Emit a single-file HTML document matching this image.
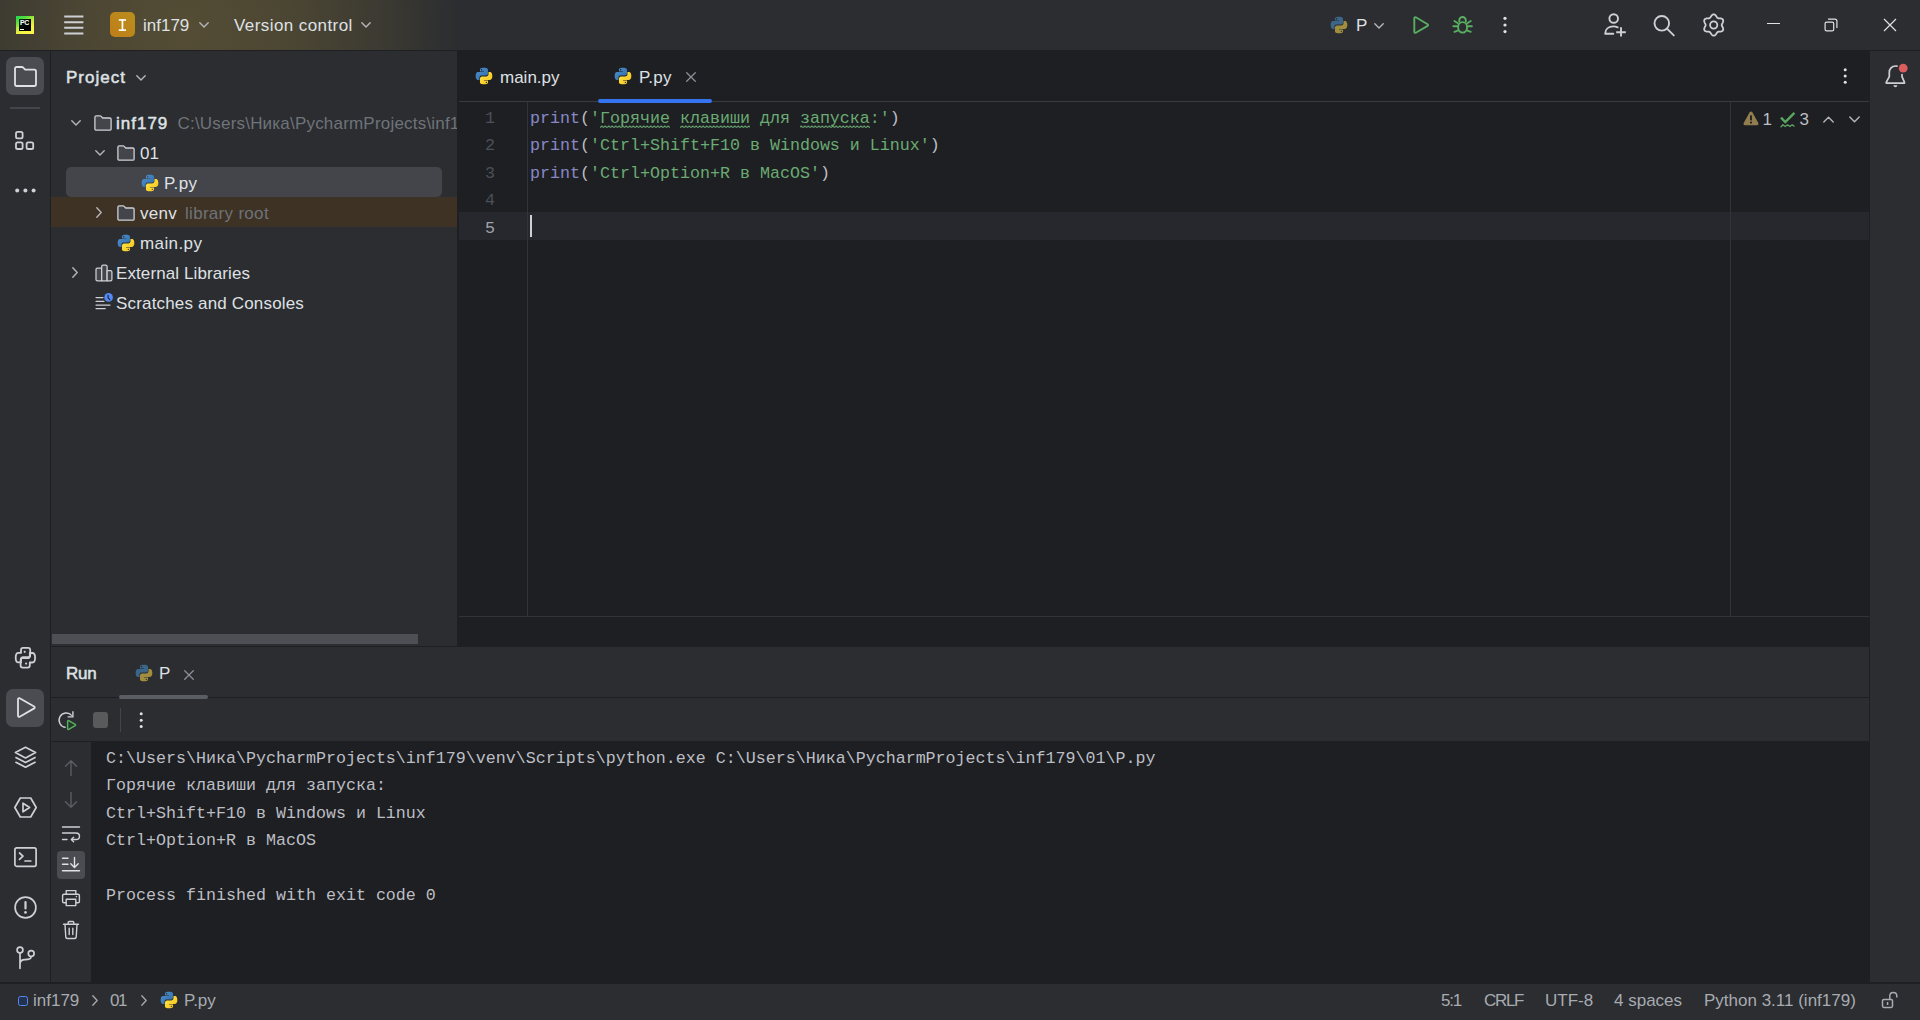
<!DOCTYPE html>
<html><head><meta charset="utf-8">
<style>
*{margin:0;padding:0;box-sizing:border-box}
html,body{width:1920px;height:1020px;overflow:hidden;background:#1E1F22}
body{position:relative;font-family:"Liberation Sans",sans-serif;color:#DFE1E5;font-size:17px}
.a{position:absolute}
svg{position:absolute;overflow:visible}
.t{position:absolute;white-space:pre;line-height:0;font-size:17px}
.b{font-weight:bold}
.sb{-webkit-text-stroke:0.5px #DFE1E5}
.m{position:absolute;white-space:pre;line-height:0;font-family:"Liberation Mono",monospace;font-size:16.667px}
.ic{fill:none;stroke:#CED0D6;stroke-width:1.6;stroke-linecap:round;stroke-linejoin:round}
</style></head><body>


<svg width="0" height="0" style="position:absolute">
<defs>
<linearGradient id="pyb" x1="0" y1="0" x2="1" y2="1"><stop offset="0" stop-color="#4F93D2"/><stop offset="1" stop-color="#2E69A3"/></linearGradient><linearGradient id="pyy" x1="0" y1="0" x2="1" y2="1"><stop offset="0" stop-color="#FFE84A"/><stop offset="1" stop-color="#F5C11A"/></linearGradient>
<symbol id="py" viewBox="0 0 16 16">
<path fill="url(#pyb)" d="M7.9 0.6C4.2 0.6 4.4 2.2 4.4 2.2V3.9H8V4.4H3C3 4.4 0.6 4.1 0.6 7.9 0.6 11.6 2.7 11.5 2.7 11.5H4V9.7S3.9 7.6 6 7.6H9.6S11.6 7.6 11.6 5.7V2.5S11.9 0.6 7.9 0.6ZM5.9 1.7A.65.65 0 1 1 5.9 3 .65.65 0 0 1 5.9 1.7Z"/>
<path fill="url(#pyy)" d="M8.1 15.4C11.8 15.4 11.6 13.8 11.6 13.8V12.1H8V11.6H13S15.4 11.9 15.4 8.1C15.4 4.4 13.3 4.5 13.3 4.5H12V6.3S12.1 8.4 10 8.4H6.4S4.4 8.4 4.4 10.3V13.5S4.1 15.4 8.1 15.4ZM10.1 14.3A.65.65 0 1 1 10.1 13 .65.65 0 0 1 10.1 14.3Z"/>
</symbol>
<symbol id="pyd" viewBox="0 0 16 16">
<path fill="#3B6589" d="M7.9 0.6C4.2 0.6 4.4 2.2 4.4 2.2V3.9H8V4.4H3C3 4.4 0.6 4.1 0.6 7.9 0.6 11.6 2.7 11.5 2.7 11.5H4V9.7S3.9 7.6 6 7.6H9.6S11.6 7.6 11.6 5.7V2.5S11.9 0.6 7.9 0.6ZM5.9 1.7A.65.65 0 1 1 5.9 3 .65.65 0 0 1 5.9 1.7Z"/>
<path fill="#A08D3E" d="M8.1 15.4C11.8 15.4 11.6 13.8 11.6 13.8V12.1H8V11.6H13S15.4 11.9 15.4 8.1C15.4 4.4 13.3 4.5 13.3 4.5H12V6.3S12.1 8.4 10 8.4H6.4S4.4 8.4 4.4 10.3V13.5S4.1 15.4 8.1 15.4ZM10.1 14.3A.65.65 0 1 1 10.1 13 .65.65 0 0 1 10.1 14.3Z"/>
</symbol>
<symbol id="chev" viewBox="0 0 10 6"><path d="M0.8 0.8L5 5L9.2 0.8" fill="none" stroke="#B4B6BB" stroke-width="1.4" stroke-linecap="round" stroke-linejoin="round"/></symbol>
<symbol id="folder" viewBox="0 0 20 20"><path d="M1.9 4.2C1.9 3.4 2.5 2.9 3.2 2.9H7.2C7.6 2.9 7.9 3.1 8.2 3.4L9.7 5H16.8C17.5 5 18.1 5.6 18.1 6.3V16C18.1 16.7 17.5 17.2 16.8 17.2H3.2C2.5 17.2 1.9 16.7 1.9 16Z" fill="#43454A" stroke="#CED0D6" stroke-width="1.3" stroke-linejoin="round"/></symbol>
</defs></svg>
<!-- ============ LAYOUT ============ -->
<!-- title bar -->
<div class="a" style="left:0;top:0;width:1920px;height:50px;background:#2B2D30"></div>
<div class="a" style="left:0;top:0;width:1920px;height:50px;background:radial-gradient(ellipse 275px 320px at 185px 30px, rgba(180,150,62,0.30) 0%, rgba(180,150,62,0.23) 40%, rgba(180,150,62,0.11) 75%, rgba(180,150,62,0.03) 92%, rgba(180,150,62,0) 100%)"></div>
<div class="a" style="left:0;top:50px;width:1920px;height:1px;background:#1E1F22"></div>

<!-- left stripe -->
<div class="a" style="left:0;top:51px;width:50px;height:931px;background:#2B2D30"></div>
<div class="a" style="left:50px;top:51px;width:1px;height:931px;background:#1E1F22"></div>

<!-- project panel -->
<div class="a" style="left:51px;top:51px;width:406px;height:595px;background:#2B2D30"></div>
<div class="a" style="left:457px;top:51px;width:2px;height:595px;background:#1E1F22"></div>

<!-- right stripe -->
<div class="a" style="left:1870px;top:51px;width:50px;height:931px;background:#2B2D30"></div>

<!-- editor -->
<div class="a" style="left:459px;top:101px;width:1410px;height:1px;background:#393B40"></div>
<div class="a" style="left:459px;top:212px;width:1410px;height:28px;background:#26282E"></div>
<div class="a" style="left:527px;top:102px;width:1px;height:514px;background:#313438"></div>
<div class="a" style="left:1730px;top:102px;width:1px;height:514px;background:#313438"></div>
<div class="a" style="left:459px;top:616px;width:1410px;height:1px;background:#313438"></div>

<!-- run panel -->
<div class="a" style="left:51px;top:646px;width:1818px;height:1px;background:#1E1F22"></div>
<div class="a" style="left:51px;top:647px;width:1818px;height:50px;background:#2B2D30"></div>
<div class="a" style="left:51px;top:697px;width:1818px;height:1px;background:#1E1F22"></div>
<div class="a" style="left:51px;top:698px;width:1818px;height:43px;background:#2B2D30"></div>
<div class="a" style="left:51px;top:741px;width:1818px;height:1px;background:#1E1F22"></div>
<div class="a" style="left:51px;top:742px;width:40px;height:240px;background:#2B2D30"></div>

<!-- status bar -->
<div class="a" style="left:0;top:984px;width:1920px;height:36px;background:#2B2D30"></div>

<!-- ============ TITLE BAR CONTENT ============ -->
<!-- PyCharm logo -->
<div class="a" style="left:16px;top:16px;width:18px;height:18px;background:linear-gradient(150deg,#1FD65A 0%,#4FDC3C 22%,#C8EC3E 50%,#F6F444 70%,#FCF84A 100%)"></div>
<div class="a" style="left:19px;top:19px;width:12px;height:12px;background:linear-gradient(135deg,#0B2A12,#000 60%)"></div>
<div class="t b" style="left:20px;top:22.5px;font-size:7px;color:#fff;letter-spacing:-0.3px">PC</div>
<div class="a" style="left:20px;top:28.5px;width:4px;height:1.2px;background:#fff"></div>

<!-- hamburger -->
<svg style="left:64px;top:14px" width="20" height="22"><g stroke="#CDCFD4" stroke-width="2" stroke-linecap="butt"><path d="M0.2 2.5H19.4M0.2 8.2H19.4M0.2 13.8H19.4M0.2 19.4H19.4"/></g></svg>

<!-- project icon -->
<div class="a" style="left:110px;top:12px;width:25px;height:25px;border-radius:5px;background:linear-gradient(225deg,#B98D1E 0%,#BC861B 50%,#C07D19 100%)"></div>
<svg style="left:110px;top:12px" width="25" height="25"><g fill="#FFFFFF"><rect x="8.8" y="7.2" width="7.2" height="1.6"/><rect x="8.8" y="17.3" width="7.2" height="1.6"/><rect x="11.6" y="7.2" width="1.7" height="11.6"/></g></svg>
<div class="t" style="left:143px;top:26px">inf179</div>
<svg style="left:199px;top:22px" width="10" height="6"><path d="M0.8 0.8L5 5L9.2 0.8" fill="none" stroke="#B4B6BB" stroke-width="1.4" stroke-linecap="round" stroke-linejoin="round"/></svg>
<div class="t" style="left:234px;top:26px;letter-spacing:0.42px">Version control</div>
<svg style="left:361px;top:22px" width="10" height="6"><path d="M0.8 0.8L5 5L9.2 0.8" fill="none" stroke="#B4B6BB" stroke-width="1.4" stroke-linecap="round" stroke-linejoin="round"/></svg>


<!-- title bar right -->
<svg style="left:1330px;top:16px" width="18" height="18"><use href="#pyd"/></svg>
<div class="t" style="left:1356px;top:26px">P</div>
<svg style="left:1374px;top:23px" width="10" height="6"><use href="#chev"/></svg>
<svg style="left:1410px;top:15px" width="20" height="20" viewBox="0 0 20 20"><path d="M4.3 3.2C4.3 2.4 5.1 1.9 5.8 2.3L17.6 9.2C18.2 9.6 18.2 10.5 17.6 10.9L5.8 17.7C5.1 18.1 4.3 17.6 4.3 16.8Z" fill="none" stroke="#5AAE62" stroke-width="1.9" stroke-linejoin="round"/></svg>
<svg style="left:1445px;top:10px" width="35" height="30" viewBox="0 0 35 30"><g fill="none" stroke="#5AAE62" stroke-width="1.9" stroke-linecap="round" stroke-linejoin="round"><ellipse cx="17.6" cy="17.35" rx="4.5" ry="5.25"/><path d="M14.3 11.6V10.3A3.25 3.25 0 0 1 20.8 10.3V11.6"/><path d="M12.9 13.2L9.4 11M12.2 16.3H8.3M12.8 20.6L9.4 21.8M22.3 13.2L25.8 11M23 16.3H26.9M22.4 20.6L25.8 21.8"/></g></svg>
<svg style="left:1502px;top:16px" width="6" height="18"><g fill="#DFE1E5"><circle cx="3" cy="2.3" r="1.6"/><circle cx="3" cy="9" r="1.6"/><circle cx="3" cy="15.6" r="1.6"/></g></svg>

<svg style="left:1603px;top:13px" width="24" height="25" viewBox="0 0 24 25"><g fill="none" stroke="#CED0D6" stroke-width="1.9" stroke-linecap="round" stroke-linejoin="round"><circle cx="10.7" cy="5.5" r="4.3"/><path d="M10.3 20.7H2.2C2.2 16.3 5.5 13.4 10.5 13.4C12 13.4 13.5 13.7 14.7 14.3"/><path d="M18 14.2V23.6M13.2 19.3H22.8" stroke-linecap="butt"/></g></svg>
<svg style="left:1652px;top:14px" width="24" height="24" viewBox="0 0 24 24"><g fill="none" stroke="#CED0D6" stroke-width="1.9" stroke-linecap="round"><circle cx="9.8" cy="9.3" r="7.3"/><path d="M15.2 14.8L21.8 21.4"/></g></svg>
<svg style="left:1701px;top:12px" width="25" height="25" viewBox="0 0 25 25"><g fill="none" stroke="#CED0D6" stroke-width="1.8" stroke-linejoin="round"><path d="M20.75 13.00 L20.79 13.35 L20.89 13.72 L21.06 14.10 L21.27 14.51 L21.50 14.95 L21.73 15.42 L21.94 15.91 L22.10 16.42 L22.19 16.93 L22.19 17.43 L22.11 17.90 L21.92 18.32 L21.64 18.70 L21.28 19.01 L20.85 19.25 L20.36 19.43 L19.84 19.54 L19.31 19.61 L18.79 19.65 L18.29 19.66 L17.83 19.69 L17.42 19.74 L17.05 19.83 L16.73 19.97 L16.44 20.18 L16.18 20.45 L15.93 20.79 L15.68 21.18 L15.41 21.60 L15.12 22.03 L14.80 22.46 L14.44 22.85 L14.04 23.18 L13.61 23.44 L13.16 23.60 L12.70 23.65 L12.24 23.60 L11.79 23.44 L11.36 23.18 L10.96 22.85 L10.60 22.46 L10.28 22.03 L9.99 21.60 L9.72 21.18 L9.47 20.79 L9.22 20.45 L8.96 20.18 L8.68 19.97 L8.35 19.83 L7.98 19.74 L7.57 19.69 L7.11 19.66 L6.61 19.65 L6.09 19.61 L5.56 19.54 L5.04 19.43 L4.55 19.25 L4.12 19.01 L3.76 18.70 L3.48 18.33 L3.29 17.90 L3.21 17.43 L3.21 16.93 L3.30 16.42 L3.46 15.91 L3.67 15.42 L3.90 14.95 L4.13 14.51 L4.34 14.10 L4.51 13.72 L4.61 13.35 L4.65 13.00 L4.61 12.65 L4.51 12.28 L4.34 11.90 L4.13 11.49 L3.90 11.05 L3.67 10.58 L3.46 10.09 L3.30 9.58 L3.21 9.07 L3.21 8.57 L3.29 8.10 L3.48 7.67 L3.76 7.30 L4.12 6.99 L4.55 6.75 L5.04 6.57 L5.56 6.46 L6.09 6.39 L6.61 6.35 L7.11 6.34 L7.57 6.31 L7.98 6.26 L8.35 6.17 L8.67 6.03 L8.96 5.82 L9.22 5.55 L9.47 5.21 L9.72 4.82 L9.99 4.40 L10.28 3.97 L10.60 3.54 L10.96 3.15 L11.36 2.82 L11.79 2.56 L12.24 2.40 L12.70 2.35 L13.16 2.40 L13.61 2.56 L14.04 2.82 L14.44 3.15 L14.80 3.54 L15.12 3.97 L15.41 4.40 L15.68 4.82 L15.93 5.21 L16.18 5.55 L16.44 5.82 L16.72 6.03 L17.05 6.17 L17.42 6.26 L17.83 6.31 L18.29 6.34 L18.79 6.35 L19.31 6.39 L19.84 6.46 L20.36 6.57 L20.85 6.75 L21.28 6.99 L21.64 7.30 L21.92 7.68 L22.11 8.10 L22.19 8.57 L22.19 9.07 L22.10 9.58 L21.94 10.09 L21.73 10.58 L21.50 11.05 L21.27 11.49 L21.06 11.90 L20.89 12.28 L20.79 12.65Z"/><circle cx="12.7" cy="13" r="3.6"/></g></svg>
<div class="a" style="left:1767px;top:23px;width:12.5px;height:1.3px;background:#DFE1E5"></div>
<svg style="left:1824px;top:18px" width="14" height="14" viewBox="0 0 14 14"><g fill="none" stroke="#DFE1E5" stroke-width="1.2"><rect x="1.1" y="4.1" width="8.6" height="8.8" rx="1.5"/><path d="M4 1.1H10.9C12 1.1 12.9 2 12.9 3.1V10"/></g></svg>
<svg style="left:1883px;top:18px" width="14" height="14" viewBox="0 0 14 14"><path d="M1 1L13 13M13 1L1 13" fill="none" stroke="#DFE1E5" stroke-width="1.2"/></svg>



<!-- ============ PROJECT PANEL ============ -->
<div class="t sb" style="left:66px;top:78px;letter-spacing:1px">Project</div>
<svg style="left:136px;top:75px" width="10" height="6"><use href="#chev"/></svg>

<!-- tree -->
<div class="a" style="left:66px;top:167px;width:376px;height:30px;border-radius:5px;background:#43454A"></div>
<div class="a" style="left:51px;top:197px;width:406px;height:30px;background:#3D3223"></div>

<svg style="left:71px;top:120px" width="10" height="6"><use href="#chev"/></svg>
<svg style="left:93px;top:113px" width="20" height="20"><use href="#folder"/></svg>
<div class="t sb" style="left:116px;top:124px;letter-spacing:1px">inf179</div>
<div class="a" style="left:170px;top:107px;width:287px;height:30px;overflow:hidden"><div class="t" style="left:7.5px;top:17px;color:#6F737A;letter-spacing:0.2px">C:\Users\Ника\PycharmProjects\inf179</div></div>

<svg style="left:95px;top:150px" width="10" height="6"><use href="#chev"/></svg>
<svg style="left:116px;top:143px" width="20" height="20"><use href="#folder"/></svg>
<div class="t" style="left:140px;top:154px">01</div>

<svg style="left:141px;top:174px" width="18" height="18"><use href="#py"/></svg>
<div class="t" style="left:164px;top:184px;letter-spacing:0.4px">P.py</div>

<svg style="left:96px;top:207px" width="6" height="11" viewBox="0 0 6 11"><path d="M0.8 0.8L5.2 5.5L0.8 10.2" fill="none" stroke="#B4B6BB" stroke-width="1.4" stroke-linecap="round" stroke-linejoin="round"/></svg>
<svg style="left:116px;top:203px" width="20" height="20"><use href="#folder"/></svg>
<div class="t" style="left:140px;top:214px;letter-spacing:0.3px">venv</div>
<div class="t" style="left:185px;top:214px;color:#6F737A;letter-spacing:0.3px">library root</div>

<svg style="left:117px;top:234px" width="18" height="18"><use href="#py"/></svg>
<div class="t" style="left:140px;top:244px;letter-spacing:0.4px">main.py</div>

<svg style="left:72px;top:267px" width="6" height="11" viewBox="0 0 6 11"><path d="M0.8 0.8L5.2 5.5L0.8 10.2" fill="none" stroke="#B4B6BB" stroke-width="1.4" stroke-linecap="round" stroke-linejoin="round"/></svg>
<svg style="left:93px;top:263px" width="20" height="20" viewBox="0 0 20 20"><g fill="#43454A" stroke="#CED0D6" stroke-width="1.25" stroke-linejoin="round"><path d="M3 6.4C3 5.6 3.6 5 4.4 5H8.7V17.8H4.4C3.6 17.8 3 17.2 3 16.4Z"/><path d="M8.7 3.4C8.7 2.6 9.3 2 10.1 2H12.7C13.5 2 14.1 2.6 14.1 3.4V17.8H8.7Z"/><path d="M14.1 7.5H17.5C18.3 7.5 18.9 8.1 18.9 8.9V16.4C18.9 17.2 18.3 17.8 17.5 17.8H14.1Z"/></g></svg>
<div class="t" style="left:116px;top:274px;letter-spacing:0.1px">External Libraries</div>

<svg style="left:93px;top:293px" width="20" height="20" viewBox="0 0 20 20"><g fill="none" stroke="#CED0D6" stroke-width="1.25" stroke-linecap="round"><path d="M3 4.6H10M3 8.3H11M3 12H17M3 15.6H12.2"/></g><circle cx="15.6" cy="4.4" r="4.3" fill="#548AF7"/><path d="M15.1 2.3V4.8L16.8 6.6" fill="none" stroke="#1E1F22" stroke-width="1.1" stroke-linecap="round"/></svg>
<div class="t" style="left:116px;top:304px;letter-spacing:0.17px">Scratches and Consoles</div>

<!-- project h-scrollbar -->
<div class="a" style="left:52px;top:634px;width:366px;height:10px;background:#4D4F54"></div>


<!-- ============ EDITOR ============ -->
<svg style="left:475px;top:67px" width="18" height="18"><use href="#py"/></svg>
<div class="t" style="left:500px;top:78px;letter-spacing:0px">main.py</div>
<svg style="left:614px;top:67px" width="18" height="18"><use href="#py"/></svg>
<div class="t" style="left:639px;top:78px;letter-spacing:0.2px">P.py</div>
<svg style="left:686px;top:71.5px" width="10" height="10" viewBox="0 0 10 10"><path d="M0.7 0.7L9.3 9.3M9.3 0.7L0.7 9.3" fill="none" stroke="#8C8F95" stroke-width="1.3" stroke-linecap="round"/></svg>
<div class="a" style="left:598px;top:99px;width:114px;height:4px;border-radius:2px;background:#3574F0"></div>
<svg style="left:1843px;top:68px" width="5" height="16"><g fill="#DFE1E5"><circle cx="2.2" cy="1.8" r="1.5"/><circle cx="2.2" cy="8" r="1.5"/><circle cx="2.2" cy="14.2" r="1.5"/></g></svg>

<!-- gutter numbers -->
<div class="m" style="left:485px;top:118.5px;color:#4B5059">1</div>
<div class="m" style="left:485px;top:146px;color:#4B5059">2</div>
<div class="m" style="left:485px;top:173.5px;color:#4B5059">3</div>
<div class="m" style="left:485px;top:201px;color:#4B5059">4</div>
<div class="m" style="left:485px;top:228.5px;color:#A1A3AB">5</div>

<!-- code -->
<div class="m" style="left:530px;top:118.5px;color:#BCBEC4"><span style="color:#8888C6">print</span>(<span style="color:#6AAB73">'Горячие клавиши для запуска:'</span>)</div>
<div class="m" style="left:530px;top:146px;color:#BCBEC4"><span style="color:#8888C6">print</span>(<span style="color:#6AAB73">'Ctrl+Shift+F10 в Windows и Linux'</span>)</div>
<div class="m" style="left:530px;top:173.5px;color:#BCBEC4"><span style="color:#8888C6">print</span>(<span style="color:#6AAB73">'Ctrl+Option+R в MacOS'</span>)</div>
<div class="a" style="left:530px;top:215px;width:2px;height:22px;background:#CED0D6"></div>
<!-- typo squiggles -->
<svg style="left:600px;top:124.5px" width="300" height="4" viewBox="0 0 300 4"><defs><pattern id="wv" width="3.5" height="4" patternUnits="userSpaceOnUse"><path d="M0 2.6L1.75 0.9L3.5 2.6" fill="none" stroke="#6AAB73" stroke-width="1"/></pattern></defs><rect x="0" y="0" width="70" height="4" fill="url(#wv)"/><rect x="80" y="0" width="70" height="4" fill="url(#wv)"/><rect x="200" y="0" width="70" height="4" fill="url(#wv)"/></svg>

<!-- inspection widget -->
<svg style="left:1743px;top:111px" width="16" height="15" viewBox="0 0 16 15"><path d="M6.6 1.3C7.2 0.3 8.8 0.3 9.4 1.3L15.3 12C15.9 13 15.1 14.3 14 14.3H2C0.9 14.3 0.1 13 0.7 12Z" fill="#927D4E"/><rect x="7.1" y="4.2" width="1.8" height="5.2" rx="0.6" fill="#1E1F22"/><circle cx="8" cy="11.6" r="1.05" fill="#1E1F22"/></svg>
<div class="t" style="left:1762.5px;top:120px;color:#BCBEC4">1</div>
<svg style="left:1779px;top:110px" width="18" height="19" viewBox="0 0 18 19"><path d="M2 7.6L6.3 12L15.4 2.8" fill="none" stroke="#5AA462" stroke-width="2.4" stroke-linecap="butt" stroke-linejoin="miter"/><path d="M1.6 17.2L3.9 14.8L6.2 16.6L8.6 14.8L10.9 16.6L13.2 14.8L15.5 16.6" fill="none" stroke="#5AA462" stroke-width="1.3" stroke-linejoin="round"/></svg>
<div class="t" style="left:1799.5px;top:120px;color:#BCBEC4">3</div>
<svg style="left:1823px;top:116px" width="11" height="7" viewBox="0 0 11 7"><path d="M0.8 6L5.5 1.2L10.2 6" fill="none" stroke="#B4B6BB" stroke-width="1.4" stroke-linecap="round" stroke-linejoin="round"/></svg>
<svg style="left:1849px;top:116px" width="11" height="7" viewBox="0 0 11 7"><path d="M0.8 1L5.5 5.8L10.2 1" fill="none" stroke="#B4B6BB" stroke-width="1.4" stroke-linecap="round" stroke-linejoin="round"/></svg>

<!-- notifications -->
<svg style="left:1883px;top:62px" width="26" height="28" viewBox="0 0 26 28"><path d="M14 4.2C13.5 4.1 13 4 12.5 4C8.8 4 6.3 6.9 6.3 10.4V14.6L3.2 20.4C3.1 20.8 3.3 21.2 3.7 21.2H21C21.4 21.2 21.7 20.8 21.5 20.4L19 14.6V12.6" fill="none" stroke="#CED0D6" stroke-width="1.7" stroke-linecap="round" stroke-linejoin="round"/><path d="M10.4 23.3C10.6 24.5 11.4 25.2 12.4 25.2S14.2 24.5 14.4 23.3Z" fill="#CED0D6"/><circle cx="20.2" cy="6.2" r="4.4" fill="#DB5C5C"/></svg>

<!-- ============ RUN PANEL ============ -->
<div class="t sb" style="left:66px;top:674px;letter-spacing:-0.3px">Run</div>
<svg style="left:135px;top:664px" width="18" height="18"><use href="#pyd"/></svg>
<div class="t" style="left:159px;top:674px">P</div>
<svg style="left:184px;top:669.5px" width="10" height="10" viewBox="0 0 10 10"><path d="M0.7 0.7L9.3 9.3M9.3 0.7L0.7 9.3" fill="none" stroke="#8C8F95" stroke-width="1.3" stroke-linecap="round"/></svg>
<div class="a" style="left:119px;top:695px;width:89px;height:4px;border-radius:2px;background:#5A5D63"></div>

<!-- toolbar -->
<svg style="left:57px;top:710px" width="22" height="22" viewBox="0 0 22 22"><path d="M14.8 5.6A7.2 7.2 0 1 0 8.7 17.4" fill="none" stroke="#CED0D6" stroke-width="1.4" stroke-linecap="butt"/><path d="M15.9 1.2V6.9H10.6" fill="none" stroke="#CED0D6" stroke-width="1.4"/><path d="M10.6 11.2C10.6 10.6 11.2 10.3 11.7 10.6L18.2 14.4C18.7 14.7 18.7 15.3 18.2 15.6L11.7 19.4C11.2 19.7 10.6 19.4 10.6 18.8Z" fill="#1F3B25" stroke="#5AAE62" stroke-width="1.4" stroke-linejoin="round"/></svg>
<div class="a" style="left:92.5px;top:712px;width:15px;height:15.5px;border-radius:3px;background:#595A5C"></div>
<div class="a" style="left:120px;top:708px;width:1px;height:24px;background:#43454A"></div>
<svg style="left:139px;top:712px" width="5" height="17"><g fill="#DFE1E5"><circle cx="2.2" cy="1.8" r="1.5"/><circle cx="2.2" cy="8.2" r="1.5"/><circle cx="2.2" cy="14.5" r="1.5"/></g></svg>

<!-- console left toolbar -->
<svg style="left:61px;top:758px" width="20" height="20" viewBox="0 0 20 20"><path d="M10 17.5V2.8M4.5 8.2L10 2.8L15.5 8.2" fill="none" stroke="#5A5D63" stroke-width="1.4" stroke-linecap="round" stroke-linejoin="round"/></svg>
<svg style="left:61px;top:790px" width="20" height="20" viewBox="0 0 20 20"><path d="M10 2.5V17.2M4.5 11.8L10 17.2L15.5 11.8" fill="none" stroke="#5A5D63" stroke-width="1.4" stroke-linecap="round" stroke-linejoin="round"/></svg>
<svg style="left:61px;top:824px" width="20" height="20" viewBox="0 0 20 20"><g fill="none" stroke="#CED0D6" stroke-width="1.4" stroke-linecap="round" stroke-linejoin="round"><path d="M1.5 3H18.5M1.5 9H15C17 9 18.5 10.3 18.5 12.2S17 15.5 15 15.5H10.5M1.5 15.5H6"/><path d="M12.6 13.3L10.4 15.5L12.6 17.7"/></g></svg>
<div class="a" style="left:57px;top:851px;width:28px;height:28px;border-radius:4px;background:#4A4C51"></div>
<svg style="left:61px;top:855px" width="20" height="20" viewBox="0 0 20 20"><g fill="none" stroke="#DFE1E5" stroke-width="1.4" stroke-linecap="round" stroke-linejoin="round"><path d="M1.5 3.2H7M1.5 9.2H7M1.5 15.8H18.5"/><path d="M13.5 2.5V12.4M9.8 8.8L13.5 12.5L17.2 8.8"/></g></svg>
<svg style="left:61px;top:888px" width="20" height="20" viewBox="0 0 20 20"><g fill="none" stroke="#CED0D6" stroke-width="1.4" stroke-linejoin="round"><path d="M5.2 6.2V2.6H14.8V6.2"/><path d="M5.2 14.8H3C2.2 14.8 1.6 14.2 1.6 13.4V7.6C1.6 6.8 2.2 6.2 3 6.2H17C17.8 6.2 18.4 6.8 18.4 7.6V13.4C18.4 14.2 17.8 14.8 17 14.8H14.8"/><path d="M5.2 11.2H14.8V17.6H5.2Z"/></g><circle cx="15.4" cy="8.6" r="0.8" fill="#CED0D6"/></svg>
<svg style="left:61px;top:920px" width="20" height="20" viewBox="0 0 20 20"><g fill="none" stroke="#CED0D6" stroke-width="1.4" stroke-linecap="round" stroke-linejoin="round"><path d="M2.5 4.2H17.5M7.2 4.2V2.4C7.2 1.9 7.6 1.5 8.1 1.5H11.9C12.4 1.5 12.8 1.9 12.8 2.4V4.2"/><path d="M4 4.5L4.8 17.2C4.9 18 5.5 18.5 6.2 18.5H13.8C14.5 18.5 15.1 18 15.2 17.2L16 4.5"/><path d="M8.2 8.2V14.5M11.8 8.2V14.5"/></g></svg>

<!-- console text -->
<div class="m" style="left:106px;top:758.5px;color:#BCBEC4">C:\Users\Ника\PycharmProjects\inf179\venv\Scripts\python.exe C:\Users\Ника\PycharmProjects\inf179\01\P.py</div>
<div class="m" style="left:106px;top:786px;color:#BCBEC4">Горячие клавиши для запуска:</div>
<div class="m" style="left:106px;top:813.5px;color:#BCBEC4">Ctrl+Shift+F10 в Windows и Linux</div>
<div class="m" style="left:106px;top:841px;color:#BCBEC4">Ctrl+Option+R в MacOS</div>
<div class="m" style="left:106px;top:896px;color:#BCBEC4">Process finished with exit code 0</div>

<!-- ============ STATUS BAR ============ -->
<div class="a" style="left:18px;top:995.5px;width:10px;height:10px;border-radius:2.5px;border:1.5px solid #548AF7;background:#25324D"></div>
<div class="t" style="left:33px;top:1000.5px;color:#A8ABB1">inf179</div>
<svg style="left:92px;top:995px" width="6" height="11" viewBox="0 0 6 11"><path d="M0.8 0.8L5.2 5.5L0.8 10.2" fill="none" stroke="#A8ABB1" stroke-width="1.3" stroke-linecap="round" stroke-linejoin="round"/></svg>
<div class="t" style="left:110px;top:1000.5px;color:#A8ABB1;letter-spacing:-1.5px">01</div>
<svg style="left:141px;top:995px" width="6" height="11" viewBox="0 0 6 11"><path d="M0.8 0.8L5.2 5.5L0.8 10.2" fill="none" stroke="#A8ABB1" stroke-width="1.3" stroke-linecap="round" stroke-linejoin="round"/></svg>
<svg style="left:160px;top:991px" width="18" height="18"><use href="#py"/></svg>
<div class="t" style="left:184px;top:1000.5px;color:#A8ABB1">P.py</div>

<div class="t" style="left:1441px;top:1000.5px;color:#A8ABB1;letter-spacing:-1.2px">5:1</div>
<div class="t" style="left:1484px;top:1000.5px;color:#A8ABB1;letter-spacing:-1.3px">CRLF</div>
<div class="t" style="left:1545px;top:1000.5px;color:#A8ABB1">UTF-8</div>
<div class="t" style="left:1614px;top:1000.5px;color:#A8ABB1">4 spaces</div>
<div class="t" style="left:1704px;top:1000.5px;color:#A8ABB1">Python 3.11 (inf179)</div>
<svg style="left:1880px;top:990px" width="20" height="20" viewBox="0 0 20 20"><g fill="none" stroke="#A8ABB1" stroke-width="1.5" stroke-linejoin="round"><rect x="2.5" y="9.4" width="10" height="8" rx="1.4"/><path d="M9.8 9.4V6C9.8 4 11.3 2.5 13.3 2.5S16.8 4 16.8 6V7.4"/></g><rect x="6.8" y="12" width="1.5" height="3" fill="#A8ABB1"/></svg>

<!-- ============ LEFT STRIPE ============ -->
<div class="a" style="left:6px;top:57px;width:38px;height:38px;border-radius:7px;background:#4A4C51"></div>
<svg style="left:13px;top:64px" width="25" height="25" viewBox="0 0 25 25"><path d="M2 4.7C2 3.7 2.8 3 3.7 3H8.9C9.4 3 9.8 3.2 10.1 3.5L12.2 5.7H21.3C22.2 5.7 23 6.5 23 7.4V20.3C23 21.2 22.2 22 21.3 22H3.7C2.8 22 2 21.2 2 20.3Z" fill="none" stroke="#DFE1E5" stroke-width="1.8" stroke-linejoin="round"/></svg>
<div class="a" style="left:10px;top:107px;width:30px;height:2px;background:#43454A"></div>
<svg style="left:14px;top:130px" width="23" height="21" viewBox="0 0 23 21"><g fill="none" stroke="#CED0D6" stroke-width="1.8"><rect x="2" y="1.8" width="6.6" height="6.6" rx="1.6"/><rect x="2" y="12.4" width="6.6" height="6.6" rx="1.6"/><rect x="12.6" y="12.4" width="6.6" height="6.6" rx="1.6"/></g></svg>
<svg style="left:14px;top:186px" width="23" height="9"><g fill="#CED0D6"><circle cx="3.2" cy="4.5" r="2"/><circle cx="11.4" cy="4.5" r="2"/><circle cx="19.6" cy="4.5" r="2"/></g></svg>

<!-- bottom stripe icons -->
<svg style="left:13px;top:645px" width="25" height="25" viewBox="0 0 25 25"><g fill="none" stroke="#CED0D6" stroke-width="1.8" stroke-linejoin="round"><path d="M8 7.9V4.8Q8 2.8 10 2.8H15.2Q17.2 2.8 17.2 4.8V10.2Q17.2 12.2 15.2 12.2H10.2Q8 12.2 8 14.4V17.4H5.4Q2.7 17.4 2.7 12.65Q2.7 7.9 5.4 7.9Z"/><path d="M8 7.9V4.8Q8 2.8 10 2.8H15.2Q17.2 2.8 17.2 4.8V10.2Q17.2 12.2 15.2 12.2H10.2Q8 12.2 8 14.4V17.4H5.4Q2.7 17.4 2.7 12.65Q2.7 7.9 5.4 7.9Z" transform="rotate(180 12.4 12.7)"/></g><circle cx="11.7" cy="6.8" r="1.1" fill="#CED0D6"/><circle cx="13.1" cy="18.6" r="1.1" fill="#CED0D6"/></svg>
<div class="a" style="left:6px;top:689px;width:38px;height:38px;border-radius:7px;background:#4A4C51"></div>
<svg style="left:13px;top:695px" width="25" height="25" viewBox="0 0 25 25"><path d="M5 4.3C5 3.4 5.9 2.9 6.7 3.3L21.2 11.5C21.9 11.9 21.9 13 21.2 13.4L6.7 21.7C5.9 22.1 5 21.6 5 20.7Z" fill="none" stroke="#DFE1E5" stroke-width="1.8" stroke-linejoin="round"/></svg>
<svg style="left:13px;top:745px" width="25" height="25" viewBox="0 0 25 25"><g fill="none" stroke="#CED0D6" stroke-width="1.7" stroke-linejoin="round"><path d="M12.5 2.3L22.6 7.6L12.5 12.9L2.4 7.6Z"/><path d="M2.4 12.2L12.5 17.5L22.6 12.2"/><path d="M2.4 16.9L12.5 22.2L22.6 16.9"/></g></svg>
<svg style="left:13px;top:795px" width="25" height="25" viewBox="0 0 25 25"><g fill="none" stroke="#CED0D6" stroke-width="1.7" stroke-linejoin="round"><path d="M7.3 3H17.7L23.2 12.5L17.7 22H7.3L1.8 12.5Z"/><path d="M10 8.2L16.6 12.5L10 16.8Z"/></g></svg>
<svg style="left:13px;top:845px" width="25" height="25" viewBox="0 0 25 25"><g fill="none" stroke="#CED0D6" stroke-width="1.7" stroke-linecap="round" stroke-linejoin="round"><rect x="1.9" y="2.9" width="21.2" height="18.4" rx="1.8"/><path d="M6.5 8L10 11.2L6.5 14.4M12 16H17.8"/></g></svg>
<svg style="left:13px;top:895px" width="25" height="25" viewBox="0 0 25 25"><g fill="none" stroke="#CED0D6" stroke-width="1.7" stroke-linecap="round"><circle cx="12.5" cy="12.5" r="10.4"/><path d="M12.5 7V13.4" stroke-width="2.2"/></g><circle cx="12.5" cy="17.4" r="1.35" fill="#CED0D6"/></svg>
<svg style="left:13px;top:945px" width="25" height="25" viewBox="0 0 25 25"><g fill="none" stroke="#CED0D6" stroke-width="1.7" stroke-linecap="round"><circle cx="7" cy="5" r="2.9"/><circle cx="18.2" cy="8.6" r="2.9"/><path d="M7 7.9V23.3M7 19C7 16 9 14.6 12 14.6C15.8 14.6 18.2 13.6 18.2 11.5"/></g></svg>

</body></html>
